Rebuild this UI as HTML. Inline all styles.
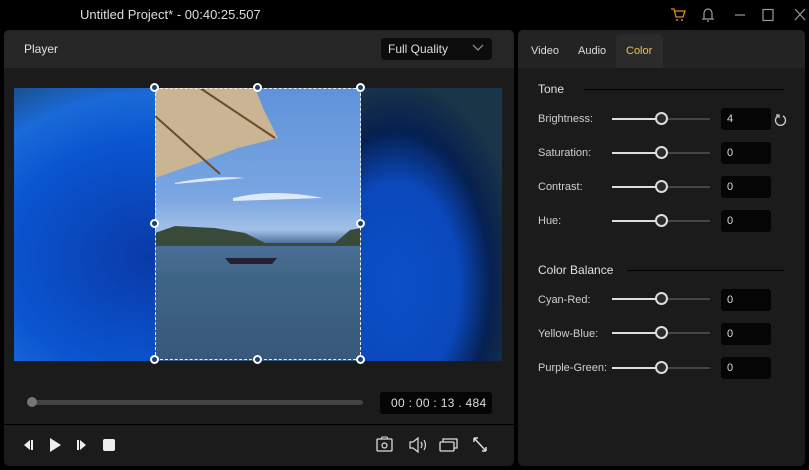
<!DOCTYPE html>
<html><head><meta charset="utf-8"><style>
*{margin:0;padding:0;box-sizing:border-box}
body{width:809px;height:470px;background:#000;position:relative;overflow:hidden;font-family:"Liberation Sans",sans-serif;font-size:12px;color:#ddd}
.abs{position:absolute}
.lab{position:absolute;left:538px;font-size:11px;color:#cfcfcf}
.trk{position:absolute;left:612px;width:98px;height:2px;background:#444}
.trk i{position:absolute;left:0;top:0;width:49px;height:2px;background:#ddd}
.trk b{position:absolute;left:43px;top:-6px;width:13px;height:13px;border-radius:50%;border:2px solid #ddd;background:#2a2a2a}
.box{position:absolute;left:721px;width:50px;height:22px;background:#050505;border-radius:3px;font-size:11px;color:#ddd;padding:5px 0 0 6px}
.h{position:absolute;border-radius:50%;width:9px;height:9px;border:2px solid #fff;background:#1a3f7a}
</style></head><body>
<div class="abs" style="left:80px;top:7px;font-size:13px;color:#ddd">Untitled Project* - 00:40:25.507</div>
<svg class="abs" style="left:668px;top:6px" width="140" height="18">
<path d="M3 3h3l2 8h7l2-6H7" fill="none" stroke="#e08a1e" stroke-width="1.3"/><circle cx="9" cy="14" r="1" fill="#e08a1e"/><circle cx="14" cy="14" r="1" fill="#e08a1e"/>
<path d="M36 12V7a4 4 0 0 1 8 0v5l1 1H35zM39 15h2" fill="none" stroke="#999" stroke-width="1.2"/>
<path d="M67 9h10" stroke="#999" stroke-width="1.2"/>
<rect x="95" y="3.5" width="10" height="11" fill="none" stroke="#999" stroke-width="1.2"/>
<path d="M127 3l10 11M137 3l-10 11" stroke="#999" stroke-width="1.2"/>
</svg>
<!-- left panel -->
<div class="abs" style="left:4px;top:30px;width:510px;height:436px;background:#1b1b1b;border-radius:5px;overflow:hidden">
<div style="height:38px;background:#262626"></div>
</div>
<div class="abs" style="left:24px;top:42px;font-size:12px;color:#e0e0e0">Player</div>
<div class="abs" style="left:381px;top:38px;width:111px;height:22px;background:#0c0c0c;border-radius:4px;font-size:12px;color:#ddd;padding:4px 0 0 7px">Full Quality</div>
<svg class="abs" style="left:472px;top:44px" width="12" height="8"><path d="M1 1l5 5 5-5" fill="none" stroke="#999" stroke-width="1.2"/></svg>
<!-- video -->
<div class="abs" style="left:14px;top:88px;width:488px;height:273px;background:radial-gradient(ellipse 60% 85% at 28% 62%,#0a3aa8 0%,#0a55d0 50%,#1a6ad8 70%,#1a4a80 90%,#1d3a50 100%)"></div>
<div class="abs" style="left:361px;top:88px;width:141px;height:273px;background:radial-gradient(ellipse 90% 75% at 25% 72%,#0b50c8 0%,#0a48bb 50%,#062050 75%,#1a3448 100%)"></div>
<div class="abs" style="left:155px;top:88px;width:206px;height:273px;background:linear-gradient(#5e92da 0%,#7aa6e2 40%,#a2c0e8 52%,#4a6f98 57%,#3f6585 70%,#37587a 100%)"></div>
<svg class="abs" style="left:155px;top:88px" width="206" height="273">
<path d="M0 0h100l8 20 15 30-40 10-40 15-43 15z" fill="#c9b493"/>
<path d="M45 0l75 50M0 28l65 58" stroke="#6b4a2a" stroke-width="2"/>
<path d="M20 95q40-8 70-5l-70 6zM78 110q40-10 90 0l-90 3z" fill="#f0f4fa" opacity=".85"/>
<path d="M0 145 20 138 60 140 90 145 110 155 180 155 195 142 206 140 206 158 0 158z" fill="#3a4a3a"/>
<path d="M70 170h52l-5 6H75z" fill="#223"/>
</svg>
<div class="abs" style="left:155px;top:88px;width:206px;height:272px;border:1px dashed #eee"></div>
<div class="h" style="left:150px;top:83px"></div><div class="h" style="left:253px;top:83px"></div><div class="h" style="left:356px;top:83px"></div>
<div class="h" style="left:150px;top:219px"></div><div class="h" style="left:356px;top:219px"></div>
<div class="h" style="left:150px;top:355px"></div><div class="h" style="left:253px;top:355px"></div><div class="h" style="left:356px;top:355px"></div>
<!-- timeline -->
<div class="abs" style="left:30px;top:400px;width:333px;height:5px;background:#444;border-radius:3px"></div>
<div class="abs" style="left:27px;top:397px;width:10px;height:10px;background:#777;border-radius:50%"></div>
<div class="abs" style="left:380px;top:392px;width:112px;height:22px;background:#050505;border-radius:3px;font-size:12px;color:#ddd;padding:4px 0 0 11px;letter-spacing:.3px">00 : 00 : 13 . 484</div>
<div class="abs" style="left:4px;top:424px;width:510px;height:1px;background:#000"></div>
<svg class="abs" style="left:20px;top:435px" width="480" height="20">
<path d="M4 10l6-5v10z" fill="#eee"/><rect x="11" y="5" width="2" height="10" fill="#eee"/>
<path d="M30 3l11 7-11 7z" fill="#eee"/>
<rect x="57" y="5" width="2" height="10" fill="#eee"/><path d="M60 5l6 5-6 5z" fill="#eee"/>
<rect x="83" y="4" width="12" height="12" rx="2" fill="#eee"/>
<rect x="357" y="4" width="15" height="12" rx="1" fill="none" stroke="#ddd" stroke-width="1.3"/><circle cx="364.5" cy="10.5" r="2.5" fill="none" stroke="#ddd" stroke-width="1.2"/><path d="M361 4l1-2h5l1 2" fill="none" stroke="#ddd"/>
<path d="M390 7h3l5-4v14l-5-4h-3z" fill="none" stroke="#ddd" stroke-width="1.2"/><path d="M401 7q2 3 0 6M404 5q3 5 0 10" fill="none" stroke="#ddd" stroke-width="1.2"/>
<rect x="420" y="7" width="14" height="9" rx="1" fill="none" stroke="#ddd" stroke-width="1.3"/><path d="M423 7V4h14v9h-3" fill="none" stroke="#ddd" stroke-width="1.3"/>
<path d="M454 3l12 13M454 3v4M454 3h4M466 16v-4M466 16h-4" fill="none" stroke="#ddd" stroke-width="1.5"/>
</svg>
<!-- right panel -->
<div class="abs" style="left:518px;top:30px;width:287px;height:436px;background:#1b1b1b;border-radius:5px;overflow:hidden">
<div style="height:38px;background:#232323"></div>
</div>
<div class="abs" style="left:616px;top:34px;width:47px;height:34px;background:#2b2b2b;border-radius:4px 4px 0 0"></div>
<div class="abs" style="left:531px;top:45px;font-size:11px;color:#ddd">Video</div>
<div class="abs" style="left:578px;top:45px;font-size:11px;color:#ddd">Audio</div>
<div class="abs" style="left:626px;top:45px;font-size:11px;color:#f0c040">Color</div>
<div class="abs" style="left:538px;top:82px;font-size:12px;color:#e0e0e0">Tone</div>
<div class="abs" style="left:584px;top:89px;width:200px;height:1px;background:#000"></div>
<div class="abs" style="left:538px;top:263px;font-size:12px;color:#e0e0e0">Color Balance</div>
<div class="abs" style="left:627px;top:270px;width:157px;height:1px;background:#000"></div>

<div class="lab" style="top:113px">Brightness:</div><div class="trk" style="top:118px"><i></i><b></b></div><div class="box" style="top:108px">4</div>
<svg class="abs" style="left:774px;top:113px" width="14" height="14"><path d="M4 3a5 5 0 1 0 5 0" fill="none" stroke="#ccc" stroke-width="1.3"/><path d="M2 2h3v3" fill="none" stroke="#ccc" stroke-width="1.3"/></svg>
<div class="lab" style="top:147px">Saturation:</div><div class="trk" style="top:152px"><i></i><b></b></div><div class="box" style="top:142px">0</div>
<div class="lab" style="top:181px">Contrast:</div><div class="trk" style="top:186px"><i></i><b></b></div><div class="box" style="top:176px">0</div>
<div class="lab" style="top:215px">Hue:</div><div class="trk" style="top:220px"><i></i><b></b></div><div class="box" style="top:210px">0</div>
<div class="lab" style="top:294px">Cyan-Red:</div><div class="trk" style="top:298px"><i></i><b></b></div><div class="box" style="top:289px">0</div>
<div class="lab" style="top:328px">Yellow-Blue:</div><div class="trk" style="top:332px"><i></i><b></b></div><div class="box" style="top:323px">0</div>
<div class="lab" style="top:362px">Purple-Green:</div><div class="trk" style="top:367px"><i></i><b></b></div><div class="box" style="top:357px">0</div>
</body></html>
